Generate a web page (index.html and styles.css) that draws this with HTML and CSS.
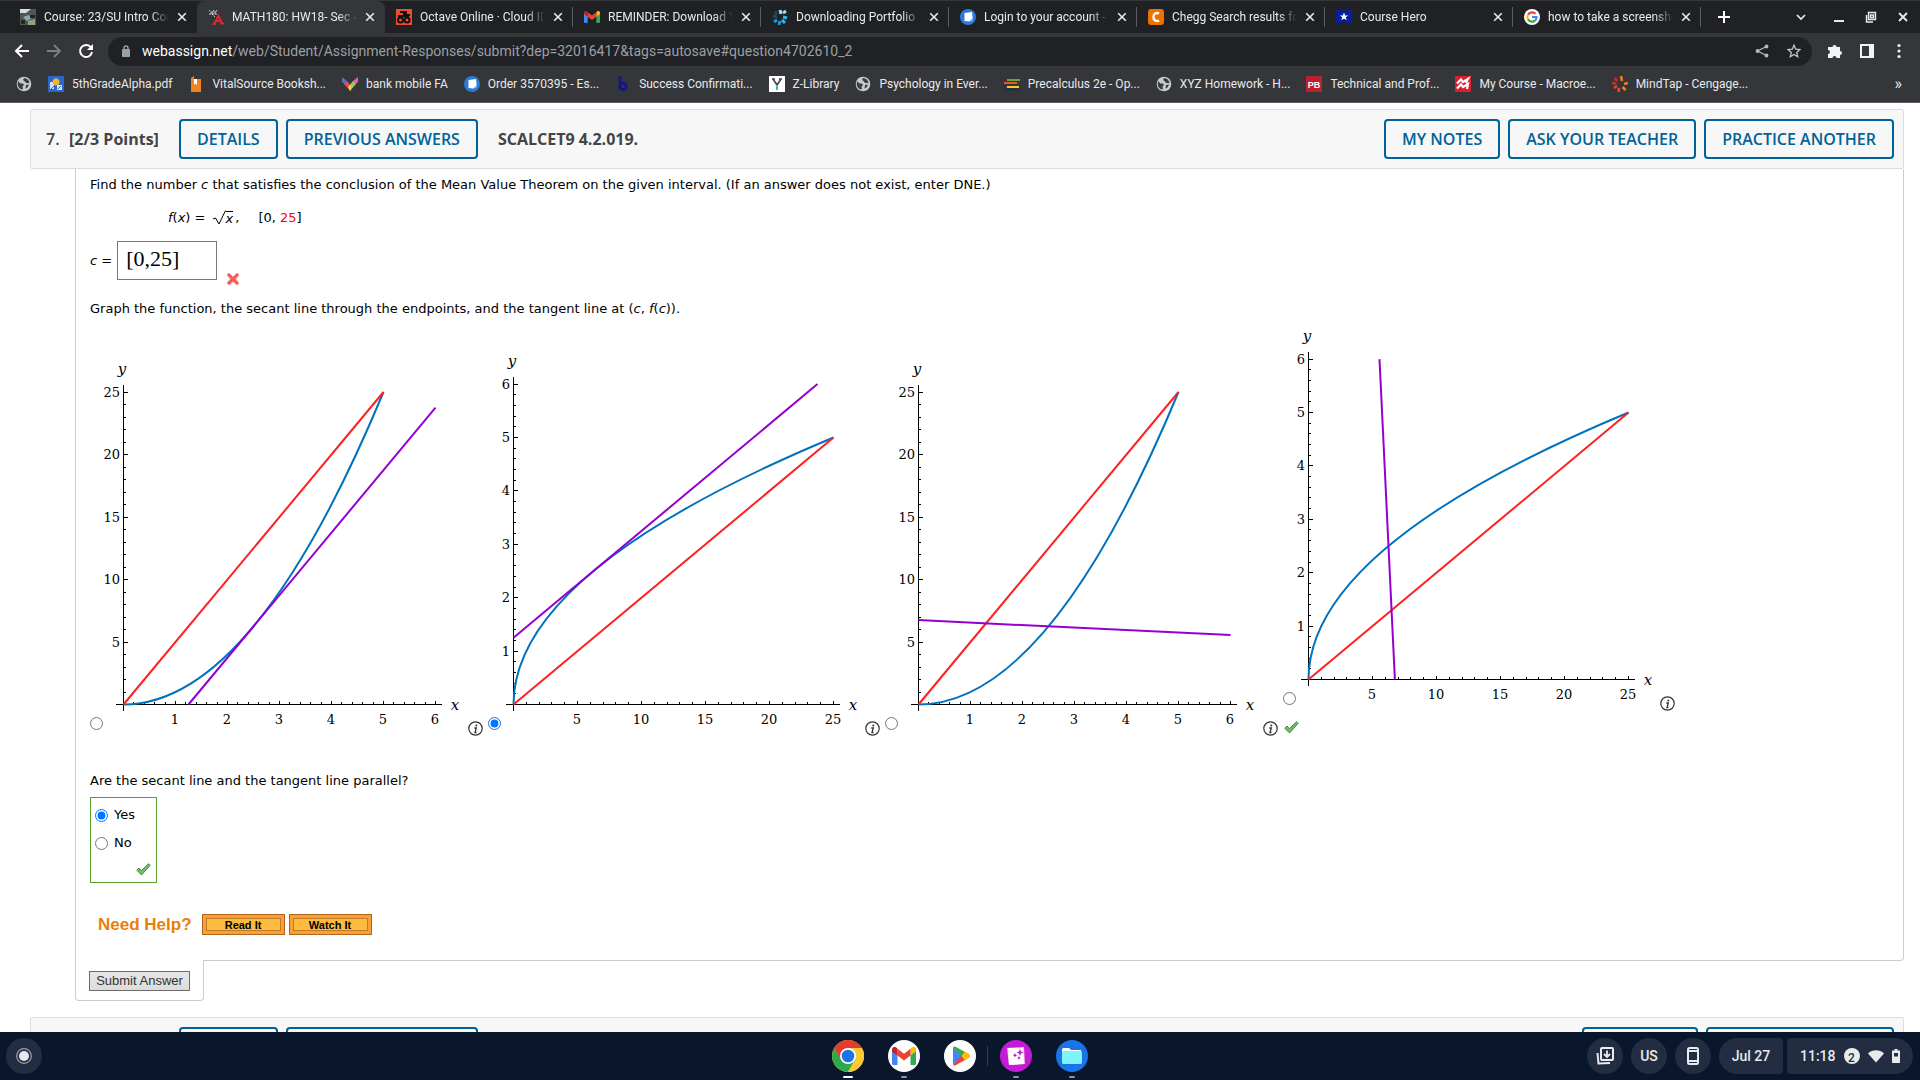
FILE: index.html
```html
<!DOCTYPE html>
<html lang="en">
<head>
<meta charset="utf-8">
<title>MATH180: HW18- Sec 4.2</title>
<link rel="stylesheet" href="styles.css">
</head>
<body>
<svg class="defs" aria-hidden="true">
  <symbol id="close" viewBox="0 0 10 10"><path d="M1.2 1.2l7.6 7.6M8.8 1.2L1.2 8.8" stroke="currentColor" stroke-width="1.6" fill="none"/></symbol>
  <symbol id="globe" viewBox="0 0 16 16"><circle cx="8" cy="8" r="7.3" fill="#c6c8cb"/><path d="M2 5l2.500 2.500h2.500l1 1.500-1.500 1.500 .5 2.500-1.500 .5a6 6 0 0 1-3-8.500zM8 2l-1 2 2 1.500 1 1.500h3.500a6 6 0 0 0-5.500-5zM10 9l3-.5-1.500 3-2 1z" fill="#3c3d41"/></symbol>
  <symbol id="msg" viewBox="0 0 16 16"><circle cx="8" cy="8" r="8" fill="#2d7bd8"/><path d="M4.500 4l7.500-1 .7 6-2.700 3.500-5.500-.5z" fill="#fff"/><path d="M8.500 12.500l4-3.500v2.500z" fill="#a8cdf5"/></symbol>
  <symbol id="gmail" viewBox="0 0 24 18"><path d="M0 2.500V16.500A1.500 1.500 0 0 0 1.500 18H5.500V8z" fill="#4285f4"/><path d="M24 2.500V16.500A1.500 1.500 0 0 1 22.500 18H18.500V8z" fill="#34a853"/><path d="M18.500 1.800V8.500L24 4.400V2.500C24 .2 21.400-.8 19.600.6z" fill="#fbbc04"/><path d="M5.500 8.500V1.800L12 6.700l6.500-4.900v6.700L12 13.400z" fill="#ea4335"/><path d="M0 2.500v1.900l5.500 4.100V1.800L4.400.6C2.600-.8 0 .2 0 2.500z" fill="#c5221f"/></symbol>
  <symbol id="info" viewBox="0 0 15 15"><circle cx="7.500" cy="7.500" r="6.700" fill="#fff" stroke="#333" stroke-width="1.200"/><circle cx="8.300" cy="4.600" r="1" fill="#333"/><path d="M6.300 7h2L7 11.500h1.500" fill="none" stroke="#333" stroke-width="1.300"/></symbol>
  <symbol id="check" viewBox="0 0 15 13"><path d="M.8 7.200L3 5l2.500 2.500L12.500.8l1.700 1.500L5.500 12z" fill="#6cbf66" stroke="#3f8f3b" stroke-width="1"/></symbol>
</svg>

<header class="browser">
  <div class="tabs">
    <div class="tab no-line"><svg class="fav" viewBox="0 0 16 16"><path fill="#4c5a50" d="M0 0h16v16H0z"/><path fill="#d5dde2" d="M0 0h11l-5 4H0z"/><path fill="#8fa8b8" d="M3 8l6-2 3 3-5 3z"/><path fill="#1d2822" d="M10 6h5v3h-5zM1 11h4v4H1z"/><path fill="#9a9d86" d="M8 12l7-2v6H8z"/></svg><span class="title">Course: 23/SU Intro Computing</span><button class="close" aria-label="Close tab"><svg><use href="#close"/></svg></button></div>
    <div class="tab active no-line"><svg class="fav" viewBox="0 0 16 16"><path d="M1 1l4 5M6 1L4 6M9 1L6 6M1 5h8M3 3h5M7 8L3 4" stroke="#c9cbce" stroke-width="1" stroke-dasharray="2 1" fill="none"/><path d="M6 15l4.500-8 3.500 7M8 12h5M4.500 15H8M12 14.500h4" stroke="#e8202a" stroke-width="2" fill="none"/></svg><span class="title">MATH180: HW18- Sec 4.2</span><button class="close" aria-label="Close tab"><svg><use href="#close"/></svg></button></div>
    <div class="tab"><svg class="fav" viewBox="0 0 16 16"><path fill="#ee4a32" d="M0 0h16v16H0z"/><g fill="none" stroke="#111" stroke-width="2"><circle cx="4.500" cy="11" r="2.500"/><circle cx="11" cy="11" r="2.500"/><path d="M4 3h4v4M10 2v4h4M2 7h11"/></g></svg><span class="title">Octave Online · Cloud IDE comp</span><button class="close" aria-label="Close tab"><svg><use href="#close"/></svg></button></div>
    <div class="tab"><svg class="fav"><use href="#gmail"/></svg><span class="title">REMINDER: Download Your file</span><button class="close" aria-label="Close tab"><svg><use href="#close"/></svg></button></div>
    <div class="tab"><svg class="fav" viewBox="0 0 16 16"><g stroke-width="3" fill="none"><path d="M8 1l1 4M11 4l3-2" stroke="#a5e0f8"/><path d="M11 8l4 1M10 11l3 3" stroke="#35b6ea"/><path d="M8 12l-1 4M5 11l-3 2" stroke="#149bd7"/><path d="M5 8L1 7M5 5L3 3" stroke="#0c5277"/></g></svg><span class="title">Downloading Portfolio</span><button class="close" aria-label="Close tab"><svg><use href="#close"/></svg></button></div>
    <div class="tab"><svg class="fav"><use href="#msg"/></svg><span class="title">Login to your account - Ess</span><button class="close" aria-label="Close tab"><svg><use href="#close"/></svg></button></div>
    <div class="tab"><svg class="fav" viewBox="0 0 16 16"><rect width="16" height="16" rx="3" fill="#eb7100"/><path d="M11 4.500a3.800 4 0 1 0 0 7" fill="none" stroke="#fff" stroke-width="2.400"/></svg><span class="title">Chegg Search results for</span><button class="close" aria-label="Close tab"><svg><use href="#close"/></svg></button></div>
    <div class="tab"><svg class="fav" viewBox="0 0 16 16"><path fill="#0a1f9c" d="M0 0l8 1.500L16 0v15l-8-2-8 2z"/><path fill="#fff" d="M8 3.500l1.200 3h3L9.800 8.300l.9 3L8 9.500l-2.700 1.800.9-3L3.800 6.500h3z"/></svg><span class="title">Course Hero</span><button class="close" aria-label="Close tab"><svg><use href="#close"/></svg></button></div>
    <div class="tab"><svg class="fav" viewBox="0 0 16 16"><circle cx="8" cy="8" r="8" fill="#fff"/><g fill="none" stroke-width="2.200"><path d="M11.500 4.800A4.600 4.600 0 0 0 4 5.800" stroke="#ea4335"/><path d="M4 5.700a4.600 4.600 0 0 0 0 4.600" stroke="#fbbc05"/><path d="M4 10.200a4.600 4.600 0 0 0 7.200 1.200" stroke="#34a853"/><path d="M11.200 11.400A4.500 4.500 0 0 0 12.500 8H8" stroke="#4285f4"/></g></svg><span class="title">how to take a screenshot</span><button class="close" aria-label="Close tab"><svg><use href="#close"/></svg></button></div>
    <button class="new-tab" aria-label="New tab"><svg viewBox="0 0 12 12"><path d="M6 0v12M0 6h12" stroke="#fff" stroke-width="2"/></svg></button>
    <div class="window-controls">
      <button aria-label="Search tabs"><svg viewBox="0 0 12 12"><path d="M2 4l4 4 4-4" stroke="#e8eaed" stroke-width="1.700" fill="none"/></svg></button>
      <button aria-label="Minimize"><svg viewBox="0 0 12 12"><path d="M1 10h10" stroke="#e8eaed" stroke-width="2"/></svg></button>
      <button aria-label="Restore"><svg viewBox="0 0 12 12"><path d="M3.500 1.500h7v7h-7zM5.500 4h3v2.500h-3zM1.500 4v7H8" stroke="#e8eaed" stroke-width="1.400" fill="none"/></svg></button>
      <button aria-label="Close window"><svg viewBox="0 0 12 12"><path d="M2 2l8 8M10 2l-8 8" stroke="#e8eaed" stroke-width="1.800"/></svg></button>
    </div>
  </div>

  <div class="toolbar">
    <button aria-label="Back"><svg viewBox="0 0 16 16"><path d="M15 8H2M8 2L2 8l6 6" stroke="#fff" stroke-width="2" fill="none"/></svg></button>
    <button aria-label="Forward"><svg viewBox="0 0 16 16"><path d="M1 8h13M8 2l6 6-6 6" stroke="#7d7f83" stroke-width="1.800" fill="none"/></svg></button>
    <button aria-label="Reload"><svg viewBox="0 0 16 16"><path d="M13 4.500A6 6 0 1 0 14 9" stroke="#fff" stroke-width="2" fill="none"/><path d="M15 1v6H9z" fill="#fff"/></svg></button>
    <div class="address">
      <svg class="lock" viewBox="0 0 8 12"><rect y="4" width="8" height="8" rx="1" fill="#9aa0a6"/><path d="M2 5V3a2 2 0 0 1 4 0v2" stroke="#9aa0a6" stroke-width="1.400" fill="none"/></svg>
      <div class="url"><b>webassign.net</b>/web/Student/Assignment-Responses/submit?dep=32016417&amp;tags=autosave#question4702610_2</div>
      <button aria-label="Share"><svg viewBox="0 0 14 14"><path d="M11.500 2.500L2.500 7l9 4.500" stroke="#b5b8bc" stroke-width="1.300" fill="none"/><g fill="#b5b8bc"><circle cx="11.500" cy="2.500" r="1.900"/><circle cx="2.500" cy="7" r="1.900"/><circle cx="11.500" cy="11.500" r="1.900"/></g></svg></button>
      <button aria-label="Bookmark this page"><svg viewBox="0 0 14 14"><path d="M7 1.200l1.700 4 4.300.4-3.300 2.800 1 4.300L7 10.400l-3.700 2.300 1-4.300L1 5.600l4.300-.4z" stroke="#c4c6ca" stroke-width="1.300" fill="none"/></svg></button>
    </div>
    <button aria-label="Extensions"><svg viewBox="0 0 16 16"><path d="M1 4h4.500a2 2 0 1 1 4 0H13v4a2 2 0 1 1 0 4v3H9.500a2 2 0 0 0-4 0H1v-4a2 2 0 0 0 0-4z" fill="#f1f3f4"/></svg></button>
    <button aria-label="Side panel"><svg viewBox="0 0 16 16"><path d="M2 2h12v12H2z" fill="none" stroke="#f1f3f4" stroke-width="2"/><path d="M10 2h4v12h-4z" fill="#f1f3f4"/></svg></button>
    <button aria-label="Menu"><svg viewBox="0 0 16 16"><g fill="#f1f3f4"><circle cx="8" cy="2.500" r="1.600"/><circle cx="8" cy="8" r="1.600"/><circle cx="8" cy="13.500" r="1.600"/></g></svg></button>
  </div>

  <nav class="bookmarks" aria-label="Bookmarks">
    <a href="#" aria-label="Website"><svg><use href="#globe"/></svg></a>
    <a href="#"><svg viewBox="0 0 16 16"><path fill="#2c66c8" d="M0 0h16v16H0z"/><path d="M2 6h4v7H2zM9 9h5v5H9z" fill="#cfe0f8"/><circle cx="8" cy="6" r="3.500" fill="#f2b437"/><path d="M3 13l4-4M10 13l3-3" stroke="#2c66c8"/></svg>5thGradeAlpha.pdf</a>
    <a href="#"><svg viewBox="0 0 16 16"><path fill="#f58220" d="M3 2l3-2v3h7v13H3z"/><path fill="#fff" d="M6 3h3v6l-1.500-1.500L6 9z"/></svg>VitalSource Booksh...</a>
    <a href="#"><svg viewBox="0 0 16 16"><path d="M0 1l5 4v5L0 6z" fill="#5a6cc0"/><path d="M5 5l3 3.500V15l-6-7z" fill="#e34a5c"/><path d="M16 1l-5 4v5l5-4z" fill="#ea5db5"/><path d="M11 5L8 8.500V15l6-7z" fill="#8fce5a"/><path d="M8 8.500l2 2.500-2 4-2-4z" fill="#f7c948"/></svg>bank mobile FA</a>
    <a href="#"><svg><use href="#msg"/></svg>Order 3570395 - Es...</a>
    <a href="#"><svg viewBox="0 0 16 16"><path d="M5 0v13" stroke="#141a7c" stroke-width="3"/><circle cx="8" cy="10.500" r="3.200" fill="none" stroke="#141a7c" stroke-width="3"/></svg>Success Confirmati...</a>
    <a href="#"><svg viewBox="0 0 16 16"><path fill="#fff" d="M0 0h16v16H0z"/><path d="M4 3l4 6 4-6M3 3h3M10 3h3" stroke="#444" stroke-width="1.600" fill="none"/><path d="M8 9v5" stroke="#3bb7d4" stroke-width="2"/></svg>Z-Library</a>
    <a href="#"><svg><use href="#globe"/></svg>Psychology in Ever...</a>
    <a href="#"><svg viewBox="0 0 16 16"><path d="M3 4h13" stroke="#63a744" stroke-width="2"/><path d="M0 7h13" stroke="#e8542f" stroke-width="2"/><path d="M3 11h12" stroke="#f4d019" stroke-width="2"/><path d="M2 13.500h13" stroke="#1e2c58" stroke-width="2"/></svg>Precalculus 2e - Op...</a>
    <a href="#"><svg><use href="#globe"/></svg>XYZ Homework - H...</a>
    <a href="#"><svg viewBox="0 0 16 16"><path fill="#b9222c" d="M0 0h16v16H0z"/><text x="8" y="12" text-anchor="middle" class="pb">PB</text></svg>Technical and Prof...</a>
    <a href="#"><svg viewBox="0 0 16 16"><path fill="#d91f2e" d="M0 0h16v16H0z"/><path d="M2 7.500L6 3.500l2 2.500 5-3-2 4M2 12.500l4-4 2 2.500 5-3-1 5" stroke="#fff" stroke-width="2.200" fill="none"/></svg>My Course - Macroe...</a>
    <a href="#"><svg viewBox="0 0 16 16"><g stroke-width="2.600" fill="none"><path d="M9 0l1 5M12 8l4-1M10.500 11l3 3" stroke="#f47b20"/><path d="M7 12l-.5 4M5 10l-3 2" stroke="#ea4a24"/><path d="M4.500 7.500L0 7M5 5L3 2" stroke="#d22b2b"/></g></svg>MindTap - Cengage...</a>
    <button class="more" aria-label="More bookmarks">»</button>
  </nav>
</header>

<main>
  <section class="question">
    <header class="q-head">
      <span class="q-no">7.</span><strong class="points">[2/3 Points]</strong>
      <button>DETAILS</button><button>PREVIOUS ANSWERS</button>
      <strong class="q-code">SCALCET9 4.2.019.</strong>
      <div class="q-actions"><button>MY NOTES</button><button>ASK YOUR TEACHER</button><button>PRACTICE ANOTHER</button></div>
    </header>
    <form class="q-body">
      <p>Find the number <i>c</i> that satisfies the conclusion of the Mean Value Theorem on the given interval. (If an answer does not exist, enter DNE.)</p>
      <p class="formula"><i>f</i>(<i>x</i>) = <svg class="radical" viewBox="0 0 13 15"><path d="M0 9l2.500-1 3.500 6L12.500.5" fill="none" stroke="#000"/></svg><i class="radicand">x</i>,<span class="interval">[0, <em>25</em>]</span></p>
      <div class="answer">
        <label for="c-answer"><i>c</i> =</label>
        <input id="c-answer" type="text" value="[0,25]">
        <svg class="wrong" viewBox="0 0 14 14" role="img" aria-label="Incorrect"><path d="M1 3l2-2 4 4 4-4 2 2-3.500 4L13 11l-2 2-4-3.500L3 13l-2-2 3.500-4z" fill="#f8595b" stroke="#fa8e8e" stroke-width="1"/></svg>
      </div>
      <p>Graph the function, the secant line through the endpoints, and the tangent line at (<i>c</i>, <i>f</i>(<i>c</i>)).</p>

      <div class="graphs">
        <div class="choice">
          <input type="radio" name="graph" aria-label="Graph 1">
          <svg class="graph" width="365" height="388" viewBox="0 0 365 388">
            <g class="axis"><path d="M13 356.500H339M20.500 37V363"/><path class="minor-x" d="M20 355H333"/><path class="minor-y" d="M22 357V44"/><path class="major-x" d="M20 354.500H333"/><path class="major-y" d="M22.500 357V44"/></g>
            <path class="curve" d="M20.500 356.500Q150.500 356.500 280.500 44"/><path class="secant" d="M20.500 356.500L280.500 44"/><path class="tangent" d="M85.500 356.500L332.500 59.600"/>
            <g class="x-nums"><text x="72" y="376">1</text><text x="124" y="376">2</text><text x="176" y="376">3</text><text x="228" y="376">4</text><text x="280" y="376">5</text><text x="332" y="376">6</text></g>
            <g class="y-nums"><text x="17" y="299">5</text><text x="17" y="236">10</text><text x="17" y="174">15</text><text x="17" y="111">20</text><text x="17" y="49">25</text></g>
            <g class="names"><text x="19" y="26">y</text><text x="352" y="362">x</text></g>
          </svg>
          <svg class="info" role="img" aria-label="Description of graph 1"><use href="#info"/></svg>
        </div>
        <div class="choice">
          <input type="radio" name="graph" aria-label="Graph 2" checked>
          <svg class="graph" width="364" height="388" viewBox="0 0 364 388">
            <g class="axis"><path d="M5 356.500H339M12.500 29V363"/><path class="minor-x5" d="M12 355H333"/><path class="minor-y6" d="M14 357V36"/><path class="major-x5" d="M12 354.500H333"/><path class="major-y6" d="M14.500 357V36"/></g>
            <path class="curve" d="M12.500 356.500Q12.500 223 332.500 89.500"/><path class="secant" d="M12.500 356.500L332.500 89.500"/><path class="tangent" d="M12.500 289.700L316.500 36.100"/>
            <g class="x-nums"><text x="76" y="376">5</text><text x="140" y="376">10</text><text x="204" y="376">15</text><text x="268" y="376">20</text><text x="332" y="376">25</text></g>
            <g class="y-nums"><text x="9" y="308">1</text><text x="9" y="254">2</text><text x="9" y="201">3</text><text x="9" y="147">4</text><text x="9" y="94">5</text><text x="9" y="41">6</text></g>
            <g class="names"><text x="11" y="18">y</text><text x="352" y="362">x</text></g>
          </svg>
          <svg class="info" role="img" aria-label="Description of graph 2"><use href="#info"/></svg>
        </div>
        <div class="choice">
          <input type="radio" name="graph" aria-label="Graph 3">
          <svg class="graph" width="365" height="388" viewBox="0 0 365 388">
            <g class="axis"><path d="M13 356.500H339M20.500 37V363"/><path class="minor-x" d="M20 355H333"/><path class="minor-y" d="M22 357V44"/><path class="major-x" d="M20 354.500H333"/><path class="major-y" d="M22.500 357V44"/></g>
            <path class="curve" d="M20.500 356.500Q150.500 356.500 280.500 44"/><path class="secant" d="M20.500 356.500L280.500 44"/><path class="tangent" d="M20.500 272.100L332.500 287.100"/>
            <g class="x-nums"><text x="72" y="376">1</text><text x="124" y="376">2</text><text x="176" y="376">3</text><text x="228" y="376">4</text><text x="280" y="376">5</text><text x="332" y="376">6</text></g>
            <g class="y-nums"><text x="17" y="299">5</text><text x="17" y="236">10</text><text x="17" y="174">15</text><text x="17" y="111">20</text><text x="17" y="49">25</text></g>
            <g class="names"><text x="19" y="26">y</text><text x="352" y="362">x</text></g>
          </svg>
          <svg class="info" role="img" aria-label="Description of graph 3"><use href="#info"/></svg>
        </div>
        <div class="last">
          <div class="choice">
            <input type="radio" name="graph" aria-label="Graph 4">
            <svg class="graph" width="364" height="388" viewBox="0 0 364 388">
              <g class="axis"><path d="M5 356.500H339M12.500 29V363"/><path class="minor-x5" d="M12 355H333"/><path class="minor-y6" d="M14 357V36"/><path class="major-x5" d="M12 354.500H333"/><path class="major-y6" d="M14.500 357V36"/></g>
              <path class="curve" d="M12.500 356.500Q12.500 223 332.500 89.500"/><path class="secant" d="M12.500 356.500L332.500 89.500"/><path class="tangent" d="M98.900 356.500L83.500 36.100"/>
              <g class="x-nums"><text x="76" y="376">5</text><text x="140" y="376">10</text><text x="204" y="376">15</text><text x="268" y="376">20</text><text x="332" y="376">25</text></g>
              <g class="y-nums"><text x="9" y="308">1</text><text x="9" y="254">2</text><text x="9" y="201">3</text><text x="9" y="147">4</text><text x="9" y="94">5</text><text x="9" y="41">6</text></g>
              <g class="names"><text x="11" y="18">y</text><text x="352" y="362">x</text></g>
            </svg>
            <svg class="info" role="img" aria-label="Description of graph 4"><use href="#info"/></svg>
          </div>
          <svg class="check" role="img" aria-label="Correct"><use href="#check"/></svg>
        </div>
      </div>

      <p>Are the secant line and the tangent line parallel?</p>
      <div class="yesno">
        <label><input type="radio" name="parallel" checked>Yes</label>
        <label><input type="radio" name="parallel">No</label>
        <svg class="check" role="img" aria-label="Correct"><use href="#check"/></svg>
      </div>
      <div class="help"><span>Need Help?</span><button type="button">Read It</button><button type="button">Watch It</button></div>
    </form>
    <div class="submit"><button>Submit Answer</button></div>
  </section>
  <section class="question">
    <header class="q-head">
      <span class="q-no"></span><strong class="points"></strong>
      <button>DETAILS</button><button>PREVIOUS ANSWERS</button>
      <div class="q-actions"><button>MY NOTES</button><button>ASK YOUR TEACHER</button></div>
    </header>
  </section>
</main>

<footer class="shelf">
  <button class="round" aria-label="Launcher"><svg viewBox="0 0 16 16"><circle cx="8" cy="8" r="7.300" fill="none" stroke="#9aa2b1" stroke-width="1.200"/><circle cx="8" cy="8" r="5" fill="#e8eaed"/></svg></button>
  <div class="apps">
    <button class="app on" aria-label="Chrome"><svg viewBox="0 0 32 32"><circle cx="16" cy="16" r="16" fill="#fbc934"/><path d="M2.200 8A16 16 0 0 0 16 32l7-12-7-12-7 12z" fill="#2da94f"/><path d="M2.200 8A16 16 0 0 1 29.900 8H16l-7 12z" fill="#e33b2e"/><path d="M29.900 8H16l7 12-7 12A16 16 0 0 0 29.900 8z" fill="#fbc934"/><circle cx="16" cy="16" r="8" fill="#fff"/><circle cx="16" cy="16" r="6.300" fill="#1a73e8"/></svg></button>
    <button class="app run" aria-label="Gmail"><svg viewBox="0 0 32 32"><circle cx="16" cy="16" r="16" fill="#fff"/><use href="#gmail" x="4" y="7" width="24" height="18"/></svg></button>
    <button class="app" aria-label="Play Store"><svg viewBox="0 0 32 32"><circle cx="16" cy="16" r="16" fill="#fff"/><path d="M9 7v18l9-9z" fill="#4285f4"/><path d="M9 7c1-1 2-.5 3 0l9 5-3.500 4.500z" fill="#34a853"/><path d="M9 25c1 1 2 .5 3 0l9-5-3.500-4.500z" fill="#ea4335"/><path d="M21 11.500l4 2.500c1.500 1 1.500 3 0 4l-4 2.500-3.500-4.500z" fill="#fbbc04"/></svg></button>
    <button class="app run divided" aria-label="Screencast"><svg viewBox="0 0 32 32"><circle cx="16" cy="16" r="16" fill="#c31bd8"/><path d="M7 8l17-1 1 17-16 1z" fill="#f6c5ce"/><path d="M8 8l15 .5 1 15.500-15 1z" fill="#fff"/><path d="M20 9l1 2.500 2.500 1-2.500 1-1 2.500-1-2.500-2.500-1 2.500-1zM15 13l.7 1.500 1.500.7-1.500.7L15 17.500l-.7-1.600-1.500-.7 1.500-.7zM19 16l.6 1.300 1.300.7-1.300.6L19 20l-.6-1.400-1.300-.6 1.300-.7z" fill="#b41bd8"/></svg></button>
    <button class="app run" aria-label="Files"><svg viewBox="0 0 32 32"><circle cx="16" cy="16" r="16" fill="#1a73e8"/><path d="M6 9.500A1.500 1.500 0 0 1 7.500 8H13l2 2h10v4H6z" fill="#fff"/><rect x="6" y="11" width="20" height="13" rx="1.500" fill="#7df3fb"/></svg></button>
  </div>
  <div class="status">
    <button class="round" aria-label="Recent files"><svg viewBox="0 0 20 20"><rect x="6" y="2" width="12" height="12" rx="1" fill="none" stroke="#e8eaed" stroke-width="2"/><path d="M12 4.500V11M9 8l3 3 3-3" fill="none" stroke="#e8eaed" stroke-width="1.800"/><path d="M2.500 7l1 10.500L15 17" fill="none" stroke="#e8eaed" stroke-width="2"/></svg></button>
    <button class="round">US</button>
    <button class="round" aria-label="Phone"><svg viewBox="0 0 20 20"><rect x="5" y="2" width="10" height="16" rx="1.500" fill="none" stroke="#e8eaed" stroke-width="2"/><path d="M5 5h10M5 15h10" stroke="#e8eaed" stroke-width="2"/></svg></button>
    <button class="date">Jul 27</button>
    <button class="time">11:18<span class="count">2</span><svg viewBox="0 0 16 16"><path d="M0 5.500a11.500 11.500 0 0 1 16 0L8 14.500z" fill="#e8eaed"/></svg><svg class="battery" viewBox="0 0 8 14"><path d="M2.500 0h3v1.500H8V14H0V1.500h2.500zM2 4v3.500h4V4z" fill="#e8eaed"/></svg></button>
  </div>
</footer>
</body>
</html>
```
FILE: styles.css
```css
* { box-sizing: border-box; }
body {
  margin: 0;
  height: 100vh;
  display: flex;
  flex-direction: column;
  overflow: hidden;
  background: #fff;
  color: #000;
  font: 13px/16px "DejaVu Sans", Verdana, sans-serif;
}
button { font: inherit; cursor: pointer; }
.defs { display: none; }

/* Browser window */
.browser {
  flex: none;
  background: #35363a;
  border-top: 1px solid #35363a;
  border-bottom: 1px solid #5a5b5e;
  color: #e8eaed;
  font: 12px/16px Roboto, sans-serif;
}
.browser button {
  display: grid;
  place-items: center;
  flex: none;
  padding: 0;
  border: 0;
  background: none;
  color: inherit;
}
.tabs { display: flex; align-items: center; height: 32px; padding-left: 9px; background: #202124; }
.tab {
  display: flex;
  align-items: center;
  flex: 0 1 188px;
  min-width: 0;
  height: 32px;
  padding: 0 5px 0 11px;
  position: relative;
}
.tab:not(.no-line)::after { content: ""; position: absolute; right: 0; top: 6px; width: 1px; height: 20px; background: #5b5c60; }
.tab.active { background: #35363a; border-radius: 8px 8px 0 0; }
.fav { width: 16px; height: 16px; flex: none; }
.title {
  flex: 1;
  min-width: 0;
  margin: 0 3px 0 8px;
  overflow: hidden;
  white-space: nowrap;
  mask-image: linear-gradient(to right, #000 85%, transparent);
}
.close svg { width: 10px; height: 10px; }
.browser .close { width: 20px; height: 20px; }
.new-tab svg { width: 12px; height: 12px; }
.browser .new-tab { width: 22px; height: 28px; margin-left: 12px; }
.window-controls { display: flex; gap: 14px; margin-left: auto; padding-right: 8px; }
.window-controls button { width: 18px; height: 24px; }
.window-controls button:first-child { margin-right: 6px; }
.window-controls svg { width: 12px; height: 12px; }

.toolbar { display: flex; align-items: center; gap: 16px; height: 36px; padding: 0 13px 0 14px; }
.toolbar > button { width: 16px; height: 16px; }
.toolbar > button svg { width: 16px; height: 16px; }
.address {
  flex: 1;
  min-width: 0;
  display: flex;
  align-items: center;
  gap: 18px;
  height: 29px;
  margin: 0 -1px 0 -2px;
  padding: 0 11px 0 14px;
  border-radius: 15px;
  background: #202124;
}
.lock { width: 8px; height: 12px; flex: none; }
.url { flex: 1; min-width: 0; margin-left: -6px; overflow: hidden; white-space: nowrap; color: #9aa0a6; font-size: 14px; }
.url b { color: #fff; font-weight: 400; }
.address button svg { width: 14px; height: 14px; }

.bookmarks { display: flex; align-items: center; gap: 16px; height: 33px; padding: 0 18px 4px 16px; }
.bookmarks a { display: flex; align-items: center; gap: 8px; color: inherit; text-decoration: none; white-space: nowrap; }
.bookmarks svg { width: 16px; height: 16px; flex: none; }
.bookmarks .more { margin-left: auto; font-size: 16px; }
.pb { fill: #fff; font: bold 9px "Liberation Sans", sans-serif; }

/* Assignment */
main { flex: 1; min-height: 0; overflow: hidden; padding: 6px 16px 0 30px; }
.question { margin-bottom: 16px; }
.q-head {
  display: flex;
  align-items: center;
  gap: 8px;
  height: 60px;
  padding: 0 9px 0 15px;
  border: 1px solid #ddd;
  border-radius: 2px;
  background: #f7f7f7;
  color: #444;
  font: 600 16px/24px "Open Sans", sans-serif;
}
.q-head button {
  height: 40px;
  padding: 0 16px;
  border: 2px solid #006298;
  border-radius: 4px;
  background: transparent;
  color: #006298;
  white-space: nowrap;
}
.q-head strong { font-weight: 700; }
.q-no { width: 15px; }
.points { width: 102px; }
.q-code { margin-left: 12px; }
.q-actions { display: flex; gap: 8px; margin-left: auto; }

.q-body { margin-left: 45px; padding: 8px 14px 25px; border: 1px solid #ccc; border-top: 0; border-radius: 0 0 4px 0; }
.q-body p { margin: 0; }
.q-body .formula { display: flex; align-items: center; height: 20px; margin-top: 15px; padding-left: 78px; white-space: pre; }
.radical { width: 13px; height: 15px; margin: -2px 0 0 3px; }
.radicand { margin-right: 2px; border-top: 1px solid #000; line-height: 14px; }
.interval { margin-left: 19px; }
.interval em { color: #f00; font-style: normal; }
.answer { display: flex; align-items: center; margin: 13px 0 21px; }
.answer input {
  width: 100px;
  height: 39px;
  margin-left: 5px;
  padding: 0 8px 4px;
  border: 1px solid #777;
  font: 22px/24px "Liberation Serif", serif;
}
.wrong { width: 14px; height: 14px; align-self: flex-end; margin: 0 0 -6px 9px; }

input[type="radio"] { width: 13px; height: 13px; margin: 0; flex: none; }
.graphs { display: flex; align-items: flex-end; margin-top: 6px; }
.choice { display: flex; align-items: flex-end; margin-right: 5px; }
.choice input { margin-bottom: 6px; }
.graph { overflow: visible; flex: none; }
.last .check { display: block; margin: 10px 0 2px 1px; }
.info { width: 15px; height: 15px; flex: none; }
.check { width: 15px; height: 13px; }
.axis { fill: none; stroke: #000; stroke-width: 1px; shape-rendering: crispEdges; }
.minor-x, .minor-y, .minor-x5, .minor-y6 { stroke-width: 2px; }
.major-x, .major-y, .major-x5, .major-y6 { stroke-width: 4px; }
.minor-x { stroke-dasharray: 1 9.4; }
.major-x { stroke-dasharray: 1 51; }
.minor-y { stroke-dasharray: 1 11.5; }
.major-y { stroke-dasharray: 1 61.5; }
.minor-x5 { stroke-dasharray: 1 11.8; }
.major-x5 { stroke-dasharray: 1 63; }
.minor-y6 { stroke-dasharray: 1 9.68; }
.major-y6 { stroke-dasharray: 1 52.4; }
.curve, .secant, .tangent { fill: none; stroke-width: 2px; }
.curve { stroke: #0072bd; }
.secant { stroke: #ff2020; }
.tangent { stroke: #9400d3; }
.x-nums, .y-nums { font: 13px "DejaVu Serif", serif; }
.x-nums, .names { text-anchor: middle; }
.y-nums { text-anchor: end; }
.names { font: italic 15px "DejaVu Serif", serif; }

.graphs + p { margin-top: 37px; }
.yesno { display: flex; flex-direction: column; width: 67px; height: 86px; margin-top: 8px; padding: 9px 5px 6px 4px; border: 1px solid #5a9e2f; gap: 12px; }
.yesno label { display: flex; align-items: center; gap: 6px; }
.yesno .check { align-self: flex-end; margin: auto 0 0; }
.help { display: flex; align-items: center; gap: 4px; margin: 31px 0 0 8px; }
.help span { margin-right: 6px; color: #e87f0a; font: bold 17px/20px "Liberation Sans", sans-serif; }
.help button {
  width: 83px;
  height: 21px;
  padding: 0;
  border: 1px solid #b0641c;
  background: #fdbb40;
  box-shadow: inset 0 0 0 3px #fb9e34, inset 0 0 0 4px #c17c26;
  font: bold 11px/16px "Liberation Sans", sans-serif;
}
.submit {
  position: relative;
  width: 129px;
  margin: -1px 0 0 45px;
  padding: 11px 0 9px 13px;
  border: 1px solid #ccc;
  border-top: 0;
  border-radius: 0 0 4px 4px;
  background: #fff;
}
.submit button {
  display: block;
  height: 20px;
  width: 101px;
  padding: 0;
  border: 1px solid #6b6b6b;
  background: linear-gradient(#e6e6e6, #dcdcdc);
  color: #333;
  font: 13px/16px "Liberation Sans", sans-serif;
}

/* System shelf */
.shelf {
  flex: none;
  display: grid;
  grid-template-columns: 1fr auto 1fr;
  align-items: center;
  height: 48px;
  padding: 0 7px 0 6px;
  background: #09162b;
}
.shelf button { padding: 0; border: 0; background: none; color: #e8eaed; font: 500 14px/20px Roboto, sans-serif; }
.shelf .round { display: grid; place-items: center; width: 36px; height: 36px; border-radius: 50%; background: #232d42; }
.round svg { width: 20px; height: 20px; }
.shelf > .round svg { width: 16px; height: 16px; }
.apps { display: flex; gap: 24px; }
.app { position: relative; width: 32px; height: 32px; }
.app svg { display: block; width: 32px; height: 32px; }
.on::after, .run::after { content: ""; position: absolute; left: 50%; bottom: -6px; width: 6px; height: 2px; margin-left: -3px; border-radius: 1px; background: #8b93a1; }
.on::after { width: 10px; margin-left: -5px; background: #fff; }
.divided::before { content: ""; position: absolute; left: -13px; top: 6px; width: 1px; height: 20px; background: #363f50; }
.status { display: flex; justify-content: flex-end; align-items: center; gap: 8px; }
.shelf .date { height: 36px; width: 64px; background: #232d42; border-radius: 18px 4px 4px 18px; }
.shelf .time { display: flex; align-items: center; gap: 8px; height: 36px; width: 126px; margin-left: -4px; padding: 0 13px; background: #232d42; border-radius: 4px 18px 18px 4px; }
.count { display: grid; place-items: center; width: 16px; height: 16px; border-radius: 50%; background: #e8eaed; color: #232d42; font-size: 12px; }
.time svg { width: 16px; height: 16px; }
.time .battery { width: 8px; height: 14px; }
```
